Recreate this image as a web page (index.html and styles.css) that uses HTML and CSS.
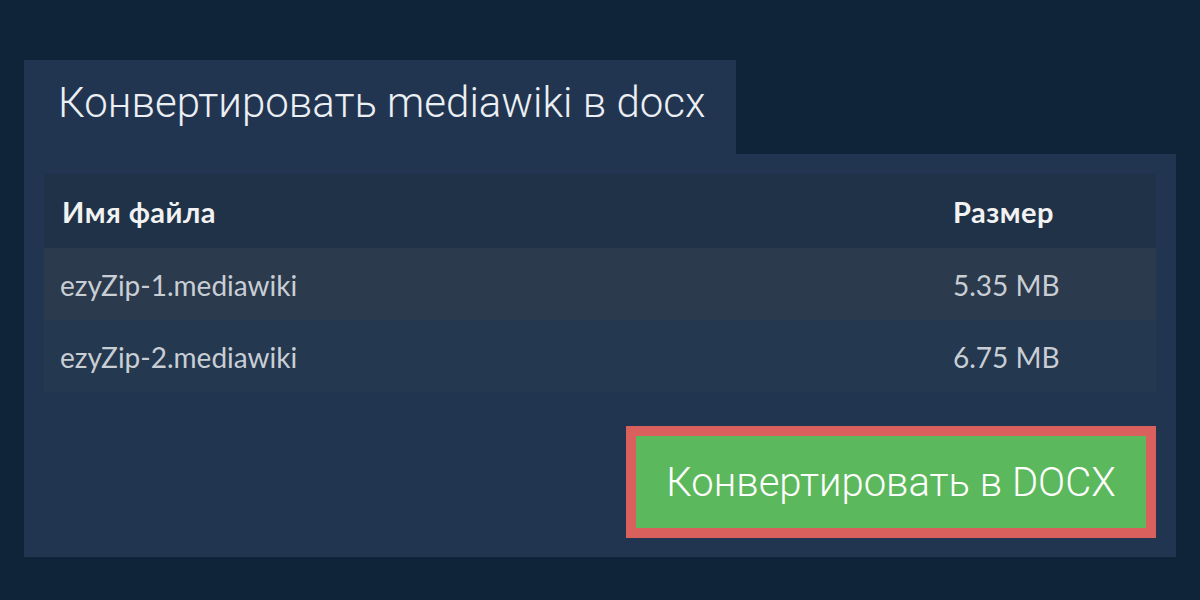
FILE: index.html
```html
<!DOCTYPE html>
<html lang="ru">
<head>
<meta charset="utf-8">
<title>Конвертировать mediawiki в docx</title>
<link rel="stylesheet" href="styles.css">
</head>
<body>
<main class="wrap">
  <div class="tab"><h1 class="title">Конвертировать mediawiki в docx</h1></div>
  <section class="panel">
    <table class="files">
      <thead>
        <tr><th class="c-name">Имя файла</th><th class="c-size">Размер</th></tr>
      </thead>
      <tbody>
        <tr class="odd"><td class="c-name">ezyZip-1.mediawiki</td><td class="c-size">5.35 MB</td></tr>
        <tr class="even"><td class="c-name">ezyZip-2.mediawiki</td><td class="c-size">6.75 MB</td></tr>
      </tbody>
    </table>
    <div class="actions">
      <button class="convert" type="button">Конвертировать в DOCX</button>
    </div>
  </section>
</main>
</body>
</html>
```

FILE: styles.css
```css
html, body {
  margin: 0;
  padding: 0;
  background: #0f2339;
  width: 1200px;
  height: 600px;
  overflow: hidden;
}
.wrap {
  padding: 60px 24px 0 24px;
}
.tab {
  width: 712px;
  height: 94px;
  background: #213550;
  box-sizing: border-box;
  padding: 17px 0 0 34px;
}
.title {
  margin: 0;
  font-family: Roboto, "Liberation Sans", sans-serif;
  font-weight: 300;
  font-size: 42px;
  line-height: 52px;
  color: #eceff3;
}
.panel {
  background: #213550;
  padding: 20px 20px 19px 20px;
}
.files {
  width: 100%;
  border-collapse: collapse;
  font-family: Lato, "Noto Sans", sans-serif;
}
.files th {
  background: #1f3248;
  height: 74px;
  box-sizing: border-box;
  text-align: left;
  font-weight: 700;
  font-size: 29px;
  letter-spacing: 0.5px;
  color: #f2f2f2;
  padding: 0 18px;
}
.files td {
  height: 72px;
  box-sizing: border-box;
  font-size: 28px;
  color: #c9ced5;
  padding: 2px 16px 0 16px;
}
.files .c-size {
  width: 221px;
  padding-left: 18px;
}
.odd td { background: #2b3a4c; }
.even td { background: #243850; }
.actions {
  display: flex;
  justify-content: flex-end;
  margin-top: 34px;
}
.convert {
  width: 530px;
  height: 112px;
  box-sizing: border-box;
  border: 10px solid #d9605c;
  background: #5cb85c;
  color: #ffffff;
  font-family: Roboto, "Liberation Sans", sans-serif;
  font-weight: 300;
  font-size: 40px;
  padding: 0;
  cursor: pointer;
}
```
